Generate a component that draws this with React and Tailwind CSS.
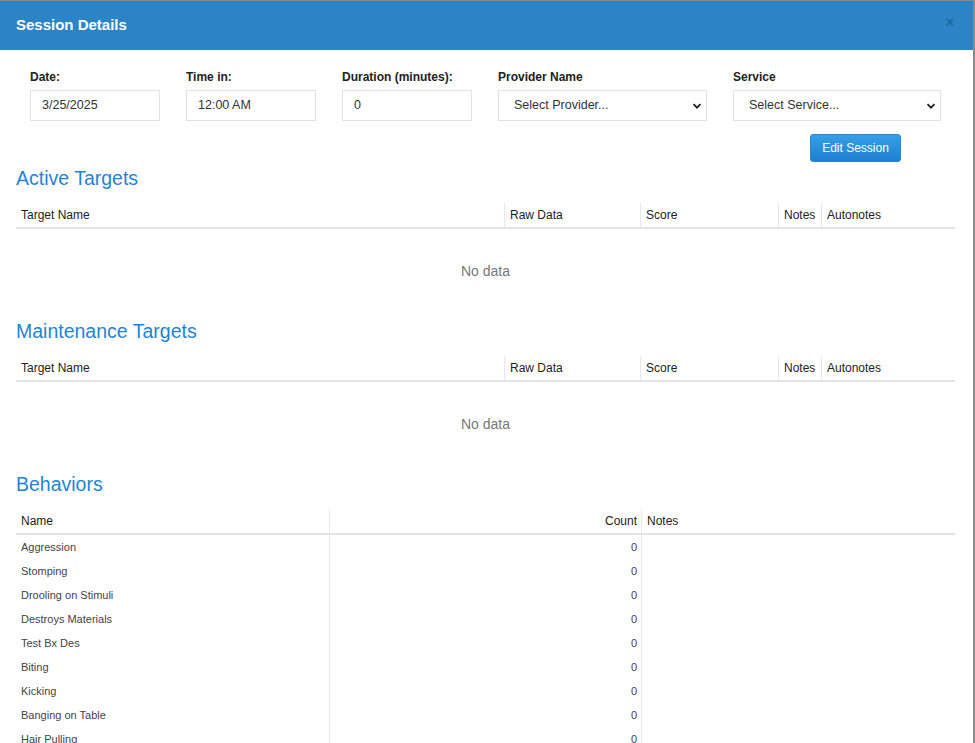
import React from "react";

const font = { fontFamily: '"Liberation Sans", Arial, sans-serif' };

function Field({ label, value, w, select }) {
  return (
    <div className="flex flex-col" style={{ width: w }}>
      <div className="h-[14px] text-[12px] font-bold leading-[14px] text-[#222]">{label}</div>
      <div
        className={`mt-[6px] flex h-[31px] items-center border border-[#e2e2e2] bg-white text-[#333] ${
          select ? "pl-[15px] pr-[4px] text-[12.5px]" : "pl-[11px] text-[12.5px]"
        }`}
      >
        <span className="flex-1">{value}</span>
        {select && (
          <svg width="10" height="10" viewBox="0 0 10 10">
            <path d="M1.5 3.2 L5 6.7 L8.5 3.2" fill="none" stroke="#222" strokeWidth="1.8" />
          </svg>
        )}
      </div>
    </div>
  );
}

function Heading({ children, mt }) {
  return (
    <div className={`h-[24px] text-[19.5px] leading-[24px] text-[#1f84d6] ${mt}`}>{children}</div>
  );
}

function TargetTable() {
  const cols = [
    { name: "Target Name", w: 488 },
    { name: "Raw Data", w: 136 },
    { name: "Score", w: 138 },
    { name: "Notes", w: 43 },
    { name: "Autonotes", w: 134 },
  ];
  return (
    <div className="mt-[13px]">
      <div className="flex h-[26px] border-b-2 border-[#e3e3e3]">
        {cols.map((c, i) => (
          <div
            key={c.name}
            className={`flex items-center px-[5px] pb-[1px] text-[12px] text-[#222] ${
              i > 0 ? "border-l border-[#e8e8e8]" : ""
            }`}
            style={{ width: c.w }}
          >
            {c.name}
          </div>
        ))}
      </div>
      <div className="flex h-[84px] items-center justify-center text-[14px] text-[#777]">No data</div>
    </div>
  );
}

const behaviors = [
  "Aggression",
  "Stomping",
  "Drooling on Stimuli",
  "Destroys Materials",
  "Test Bx Des",
  "Biting",
  "Kicking",
  "Banging on Table",
  "Hair Pulling",
];

export default function App() {
  return (
    <div className="h-[743px] w-[975px] overflow-hidden bg-white" style={font}>
      <div className="h-full w-[975px] border-r-2 border-t border-[#8a8a8a]">
        <div className="flex h-[49px] items-center justify-between bg-[#2a84c6] pl-[16px] pr-[19px]">
          <span className="text-[15px] font-bold text-white">Session Details</span>
          <span className="-mt-[6px] text-[14px] font-bold text-[#1e5f93] opacity-80">×</span>
        </div>
        <div className="pl-[30px] pt-[20px]">
          <div className="flex gap-[26px]">
            <Field label="Date:" value="3/25/2025" w={130} />
            <Field label="Time in:" value="12:00 AM" w={130} />
            <Field label="Duration (minutes):" value="0" w={130} />
            <Field label="Provider Name" value="Select Provider..." w={209} select />
            <Field label="Service" value="Select Service..." w={208} select />
          </div>
        </div>
        <div className="flex justify-end pr-[72px] pt-[13px]">
          <button className="h-[28px] w-[91px] rounded-[3px] border border-[#2b87cf] bg-gradient-to-b from-[#33a0e8] to-[#1e80d0] text-[12px] text-white">
            Edit Session
          </button>
        </div>
        <div className="pl-[16px] pr-[18px]">
          <Heading mt="mt-[4px]">Active Targets</Heading>
          <TargetTable />
          <Heading mt="mt-[6px]">Maintenance Targets</Heading>
          <TargetTable />
          <Heading mt="mt-[6px]">Behaviors</Heading>
          <div className="mt-[13px]">
            <div className="flex h-[26px] border-b-2 border-[#e3e3e3]">
              <div className="flex w-[313px] items-center px-[5px] pb-[1px] text-[12px] text-[#222]">Name</div>
              <div className="flex w-[312px] items-center justify-end border-l border-[#e8e8e8] pb-[1px] pr-[4px] text-[12px] text-[#222]">
                Count
              </div>
              <div className="flex flex-1 items-center border-l border-[#e8e8e8] px-[5px] pb-[1px] text-[12px] text-[#222]">
                Notes
              </div>
            </div>
            {behaviors.map((b) => (
              <div key={b} className="flex h-[24px]">
                <div className="flex w-[313px] items-center px-[5px] text-[11px] text-[#444]">{b}</div>
                <div className="flex w-[312px] items-center justify-end border-l border-[#e8e8e8] pr-[4px] text-[11px] text-[#444]">
                  0
                </div>
                <div className="flex-1 border-l border-[#e8e8e8]" />
              </div>
            ))}
          </div>
        </div>
      </div>
    </div>
  );
}
